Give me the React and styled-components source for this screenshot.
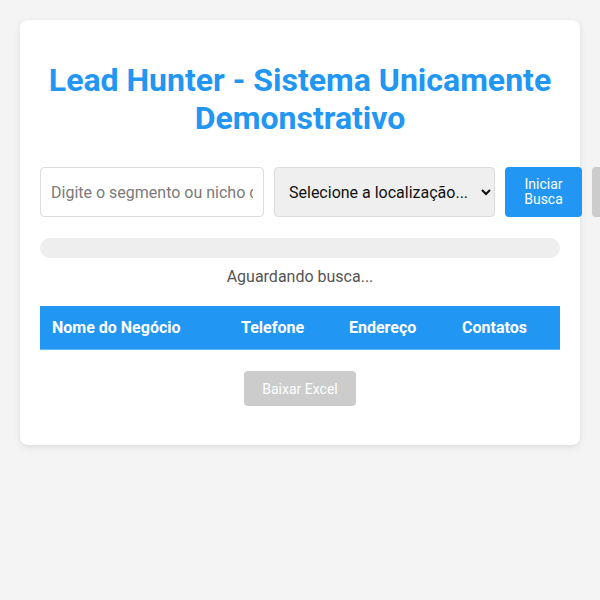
import React from "react";
import styled, { createGlobalStyle } from "styled-components";

const Global = createGlobalStyle`
  body {
    margin: 0;
    background: #f4f4f4;
    font-family: Roboto, "Liberation Sans", Arial, sans-serif;
  }
`;

const Page = styled.div`
  padding: 20px;
`;

const Card = styled.div`
  background: #fff;
  border-radius: 8px;
  box-shadow: 0 2px 6px rgba(0, 0, 0, 0.1);
  padding: 20px 20px 39px;
`;

const Title = styled.h1`
  margin: 21px 0 30px;
  font-size: 32px;
  line-height: 38px;
  font-weight: 700;
  text-align: center;
  color: #2196f3;
`;

const Controls = styled.div`
  display: flex;
  gap: 10px;
  height: 50px;
`;

const SearchInput = styled.input`
  box-sizing: border-box;
  flex: 0 0 224px;
  width: 224px;
  min-width: 0;
  height: 50px;
  padding: 0 10px;
  border: 1px solid #ddd;
  border-radius: 4px;
  font-family: inherit;
  font-size: 16px;
  color: #333;
  &::placeholder {
    color: #7a7a7a;
  }
`;

const Select = styled.select`
  box-sizing: border-box;
  flex: 0 0 221px;
  width: 221px;
  min-width: 0;
  height: 50px;
  padding: 0 10px;
  border: 1px solid #ddd;
  border-radius: 4px;
  background: #efefef;
  font-family: inherit;
  font-size: 16px;
  color: #111;
`;

const Button = styled.button`
  box-sizing: border-box;
  flex: 0 0 ${(p) => p.$w}px;
  width: ${(p) => p.$w}px;
  height: 50px;
  border: none;
  border-radius: 4px;
  background: ${(p) => (p.$disabled ? "#ccc" : "#2196f3")};
  color: #fff;
  font-family: inherit;
  font-size: 14px;
  line-height: 15px;
  padding: 0 8px;
`;

const Progress = styled.div`
  margin-top: 21px;
  height: 20px;
  border-radius: 10px;
  background: #eee;
`;

const Status = styled.p`
  margin: 9px 0 0;
  text-align: center;
  font-size: 16px;
  line-height: 20px;
  color: #555;
`;

const Table = styled.table`
  margin-top: 19px;
  width: 100%;
  border-collapse: collapse;
`;

const Th = styled.th`
  background: #2196f3;
  color: #fff;
  font-size: 16px;
  font-weight: 700;
  text-align: left;
  height: 43px;
  padding: 0 12px;
  border-bottom: 1px solid #64b5f6;
`;

const Footer = styled.div`
  display: flex;
  justify-content: center;
  margin-top: 21px;
`;

const ExcelButton = styled.button`
  width: 112px;
  height: 35px;
  border: none;
  border-radius: 4px;
  background: #ccc;
  color: #fff;
  font-family: inherit;
  font-size: 14px;
`;

export default function App() {
  return (
    <Page>
      <Global />
      <Card>
        <Title>Lead Hunter - Sistema Unicamente Demonstrativo</Title>
        <Controls>
          <SearchInput placeholder="Digite o segmento ou nicho de mercado" />
          <Select defaultValue="">
            <option value="">Selecione a localização...</option>
          </Select>
          <Button $w={77}>Iniciar Busca</Button>
          <Button $w={110} $disabled>Parar Busca</Button>
        </Controls>
        <Progress />
        <Status>Aguardando busca...</Status>
        <Table>
          <thead>
            <tr>
              <Th style={{ width: 165 }}>Nome do Negócio</Th>
              <Th style={{ width: 84 }}>Telefone</Th>
              <Th style={{ width: 89 }}>Endereço</Th>
              <Th>Contatos</Th>
            </tr>
          </thead>
        </Table>
        <Footer>
          <ExcelButton disabled>Baixar Excel</ExcelButton>
        </Footer>
      </Card>
    </Page>
  );
}
